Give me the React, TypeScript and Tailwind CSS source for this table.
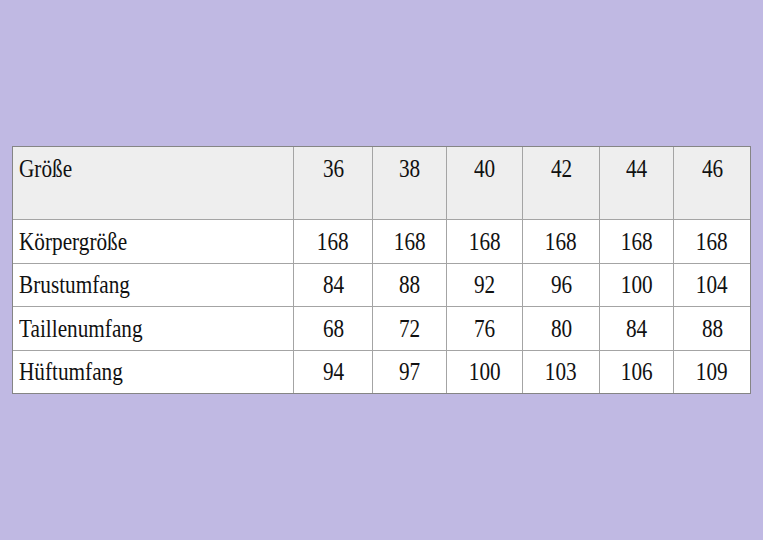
const sizes = ['36', '38', '40', '42', '44', '46']

const rows: { label: string; values: string[] }[] = [
  { label: 'Körpergröße', values: ['168', '168', '168', '168', '168', '168'] },
  { label: 'Brustumfang', values: ['84', '88', '92', '96', '100', '104'] },
  { label: 'Taillenumfang', values: ['68', '72', '76', '80', '84', '88'] },
  { label: 'Hüftumfang', values: ['94', '97', '100', '103', '106', '109'] },
]

const heights = ['h-[43px]', 'h-[42px]', 'h-[43px]', 'h-[42px]']

export default function App() {
  return (
    <div
      className="w-[763px] h-[540px] bg-[#c0b9e3] pt-[146px] pl-[12px] text-[#111111]"
      style={{ fontFamily: '"Liberation Serif", "Times New Roman", serif' }}
    >
      <div className="w-[739px] border border-[#858585]">
        <div className="grid grid-cols-[280px_78px_73px_75px_76px_73px_76px] gap-px bg-[#a4a4a4] text-[25px] leading-[28px]">
          {/* header */}
          <div className="h-[72px] bg-[#eeeeee] pl-[6px] pt-2">
            <span className="inline-block origin-left scale-x-[0.85]">Größe</span>
          </div>
          {sizes.map((s) => (
            <div key={s} className="h-[72px] bg-[#eeeeee] pt-2 text-center">
              <span className="inline-block scale-x-[0.85]">{s}</span>
            </div>
          ))}

          {rows.map((r, i) => (
            <>
              <div key={r.label} className={`${heights[i]} flex items-center bg-white pl-[6px]`}>
                <span className="inline-block origin-left scale-x-[0.85]">{r.label}</span>
              </div>
              {r.values.map((v, j) => (
                <div key={r.label + j} className={`${heights[i]} flex items-center justify-center bg-white`}>
                  <span className="inline-block scale-x-[0.85]">{v}</span>
                </div>
              ))}
            </>
          ))}
        </div>
      </div>
    </div>
  )
}
